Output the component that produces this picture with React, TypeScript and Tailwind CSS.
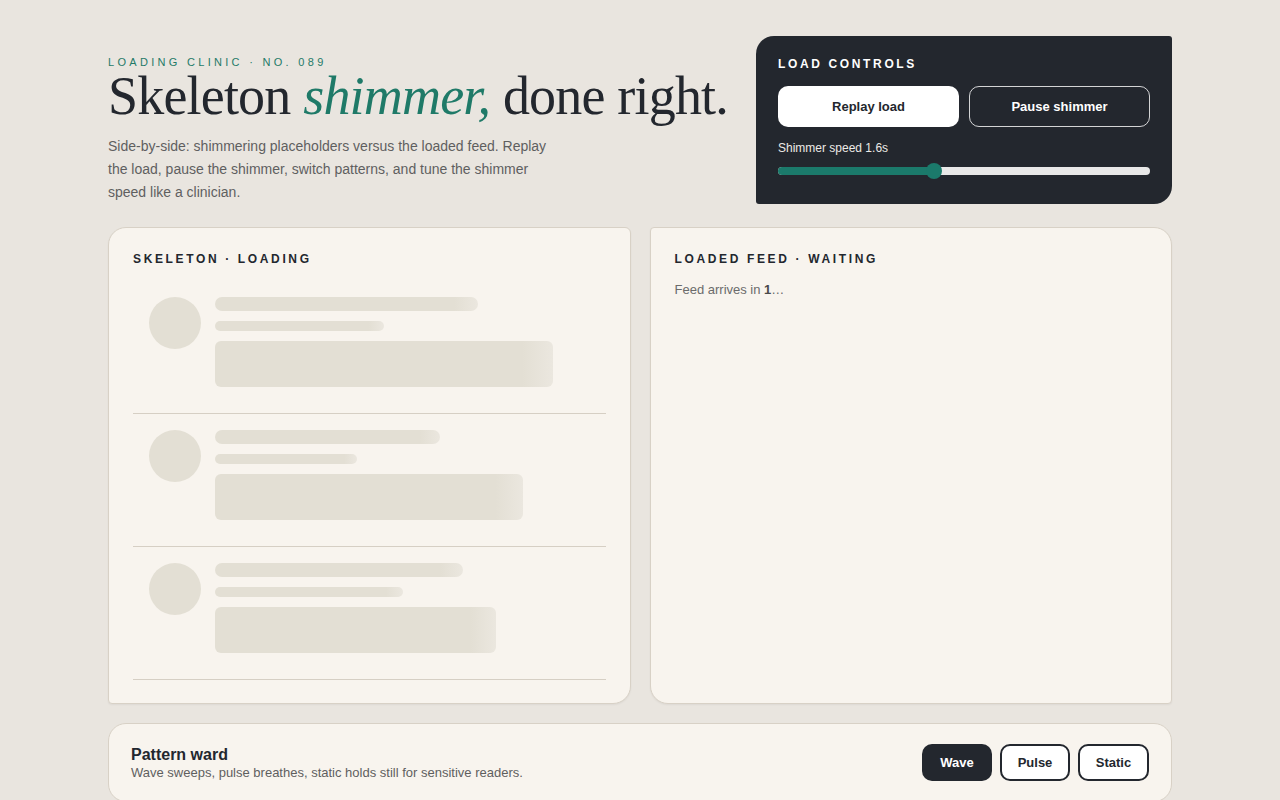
import React from "react";

const rows = [
  { line1: 263, line2: 169, block: 338 },
  { line1: 225, line2: 142, block: 308 },
  { line1: 248, line2: 188, block: 281 },
];

const bone = "bg-[linear-gradient(90deg,#e3dfd4_0%,#e3dfd4_91%,#ebe7df_100%)]";

function SkeletonRow({ line1, line2, block }: { line1: number; line2: number; block: number }) {
  return (
    <div className="flex gap-[14px] border-b border-[#d6cfc4] px-4 pt-4 pb-[26px]">
      <div className="h-[52px] w-[52px] shrink-0 rounded-full bg-[#e3dfd4]" />
      <div className="flex flex-col gap-[10px]">
        <div className={`h-[14px] rounded-full ${bone}`} style={{ width: line1 }} />
        <div className={`h-[10px] rounded-full ${bone}`} style={{ width: line2 }} />
        <div className={`h-[46px] rounded-[6px] ${bone}`} style={{ width: block }} />
      </div>
    </div>
  );
}

export default function App() {
  return (
    <div className="min-h-screen bg-[#e9e5df] font-['Liberation_Sans',Arial,sans-serif] text-[#23272e]">
      <div className="mx-auto w-[1064px] pt-9">
        <header className="flex items-end justify-between">
          <div>
            <p className="text-[11px] uppercase leading-[11px] tracking-[0.3em] text-[#1f7a68]">
              Loading clinic · No. 089
            </p>
            <h1 className="mt-[5px] font-['Liberation_Serif','Times_New_Roman',serif] text-[54px] leading-[46px] tracking-[-0.015em] text-[#23272e]">
              Skeleton <em className="text-[#1f7a68]">shimmer,</em> done right.
            </h1>
            <p className="mt-[16px] w-[450px] text-[14px] leading-[23px] text-[#5f5f5f]">
              Side-by-side: shimmering placeholders versus the loaded feed. Replay the load, pause the
              shimmer, switch patterns, and tune the shimmer speed like a clinician.
            </p>
          </div>
          <div className="w-[416px] rounded-[18px_3px_18px_3px] bg-[#23272e] px-[22px] pt-5 pb-[25px]">
            <p className="text-[12px] font-bold uppercase leading-4 tracking-[0.22em] text-white">
              Load controls
            </p>
            <div className="mt-[14px] grid grid-cols-2 gap-[10px]">
              <button className="h-[41px] rounded-[10px] bg-white text-[13px] font-bold text-[#23272e]">
                Replay load
              </button>
              <button className="h-[41px] rounded-[10px] border border-white/80 text-[13px] font-bold text-white">
                Pause shimmer
              </button>
            </div>
            <p className="mt-[13px] text-[12px] leading-4 text-[#eceae6]">Shimmer speed 1.6s</p>
            <div className="relative mt-[7px] h-4">
              <div className="absolute top-1/2 right-0 left-0 h-[8px] -translate-y-1/2 rounded-full bg-[#e8e8e8]" />
              <div
                className="absolute top-1/2 left-0 h-[8px] -translate-y-1/2 rounded-full bg-[#1b7a6b]"
                style={{ width: "42%" }}
              />
              <div
                className="absolute top-1/2 h-4 w-4 -translate-x-1/2 -translate-y-1/2 rounded-full bg-[#1b7a6b]"
                style={{ left: "42%" }}
              />
            </div>
          </div>
        </header>

        <section className="mt-[23px] grid grid-cols-2 gap-[19px]">
          <div className="h-[477px] rounded-[18px_6px_18px_4px] border border-[#d8d1c6] bg-[#f8f4ee] px-6 pt-[23px] shadow-[0_1px_2px_rgba(0,0,0,0.05)]">
            <h2 className="text-[12px] font-bold uppercase leading-4 tracking-[0.22em] text-[#23272e]">
              Skeleton · Loading
            </h2>
            <div className="mt-[14px]">
              {rows.map((r, i) => (
                <SkeletonRow key={i} {...r} />
              ))}
            </div>
          </div>
          <div className="h-[477px] rounded-[4px_18px_4px_18px] border border-[#d8d1c6] bg-[#f8f4ee] px-6 pt-[23px] shadow-[0_1px_2px_rgba(0,0,0,0.05)]">
            <h2 className="text-[12px] font-bold uppercase leading-4 tracking-[0.22em] text-[#23272e]">
              Loaded feed · Waiting
            </h2>
            <p className="mt-[15px] text-[13px] leading-4 text-[#6b6b6b]">
              Feed arrives in <b className="text-[#4a4a4a]">1</b>…
            </p>
          </div>
        </section>

        <section className="mt-[19px] flex items-center justify-between rounded-[18px] border border-[#d8d1c6] bg-[#f8f4ee] py-5 pr-[22px] pl-[22px]">
          <div>
            <h3 className="text-[16px] font-bold leading-5 text-[#23272e]">Pattern ward</h3>
            <p className="text-[13px] leading-4 text-[#5f5f5f]">
              Wave sweeps, pulse breathes, static holds still for sensitive readers.
            </p>
          </div>
          <div className="flex gap-2">
            <button className="h-[37px] w-[70px] rounded-[10px] bg-[#23272e] text-[13px] font-bold text-white">
              Wave
            </button>
            <button className="h-[37px] w-[70px] rounded-[10px] border-2 border-[#23272e] bg-white text-[13px] font-bold text-[#23272e]">
              Pulse
            </button>
            <button className="h-[37px] w-[71px] rounded-[10px] border-2 border-[#23272e] bg-white text-[13px] font-bold text-[#23272e]">
              Static
            </button>
          </div>
        </section>
      </div>
    </div>
  );
}
